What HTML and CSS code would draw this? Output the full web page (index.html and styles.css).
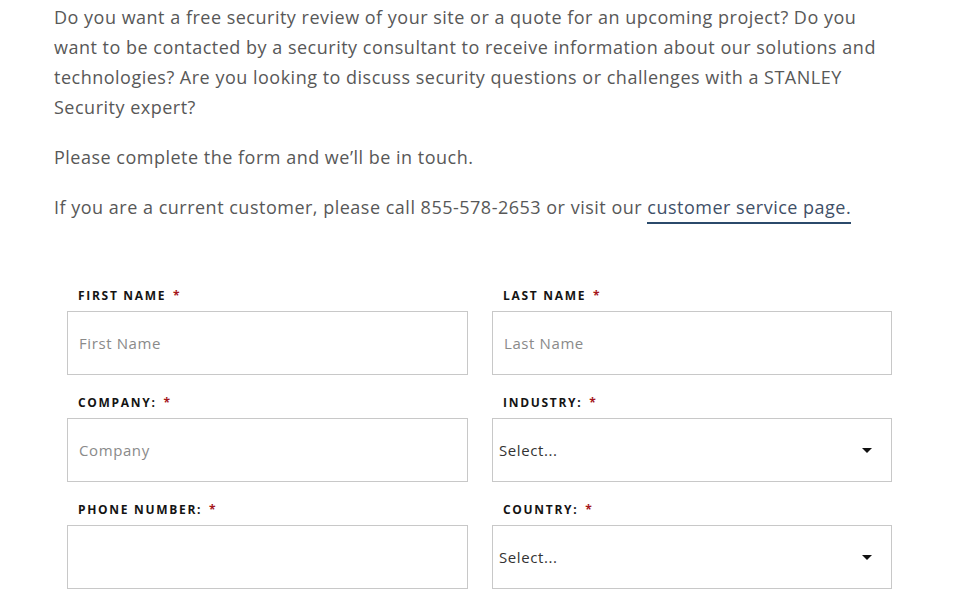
FILE: index.html
```html
<!DOCTYPE HTML>
<html>
    <head>
        <title>Contact a Security Expert</title>
        <meta charset="utf-8" />
        <meta name="viewport" content="width=device-width, initial-scale=1" />
        <link rel="stylesheet" href="styles.css">
    </head>
    <body>
        <div class="page">
            <div class="intro">
                <p>Do you want a free security review of your site or a quote for an upcoming project? Do you want to be contacted by a security consultant to receive information about our solutions and technologies? Are you looking to discuss security questions or challenges with a STANLEY Security expert?</p>
                <p>Please complete the form and we’ll be in touch.</p>
                <p>If you are a current customer, please call 855-578-2653 or visit our <a href="#" class="link">customer service page.</a></p>
            </div>

            <form class="lead-form">
                <div class="field">
                    <label for="firstName">First Name <span class="req">*</span></label>
                    <input type="text" id="firstName" placeholder="First Name">
                </div>
                <div class="field">
                    <label for="lastName">Last Name <span class="req">*</span></label>
                    <input type="text" id="lastName" placeholder="Last Name">
                </div>
                <div class="field">
                    <label for="company">Company: <span class="req">*</span></label>
                    <input type="text" id="company" placeholder="Company">
                </div>
                <div class="field">
                    <label for="industry">Industry: <span class="req">*</span></label>
                    <div class="select-wrap">
                        <select id="industry">
                            <option>Select...</option>
                        </select>
                    </div>
                </div>
                <div class="field">
                    <label for="phone">Phone Number: <span class="req">*</span></label>
                    <input type="tel" id="phone">
                </div>
                <div class="field">
                    <label for="country">Country: <span class="req">*</span></label>
                    <div class="select-wrap">
                        <select id="country">
                            <option>Select...</option>
                        </select>
                    </div>
                </div>
            </form>
        </div>
    </body>
</html>
```

FILE: styles.css
```css
body {
    margin: 0;
    font-family: "Open Sans", "Liberation Sans", sans-serif;
    background-color: #fff;
    color: #585858;
}

.page {
    padding: 2px 0 0 54px;
}

.intro {
    width: 835px;
}

.intro p {
    font-size: 18px;
    line-height: 30px;
    letter-spacing: 0.5px;
    margin: 0 0 20px;
}

.link {
    color: #3f5068;
    text-decoration: none;
    border-bottom: 2px solid #2b4a6b;
    padding-bottom: 3px;
}

.lead-form {
    margin: 66px 0 0 13px;
    display: grid;
    grid-template-columns: 401px 400px;
    column-gap: 24px;
    row-gap: 20px;
}

.field label {
    display: block;
    padding-left: 11px;
    margin-bottom: 7px;
    font-size: 12px;
    font-weight: 700;
    letter-spacing: 1.7px;
    text-transform: uppercase;
    color: #141414;
    line-height: 16px;
}

.req {
    color: #a5161b;
    margin-left: 2px;
}

.field input,
.field select {
    box-sizing: border-box;
    width: 100%;
    height: 64px;
    border: 1px solid #c8c8c8;
    border-radius: 0;
    background: #fff;
    font-family: inherit;
    font-size: 15px;
    letter-spacing: 0.6px;
    color: #333;
    outline: none;
}

.field input {
    padding: 0 11px;
}

.field input::placeholder {
    color: #8a8a8a;
}

.select-wrap {
    position: relative;
}

.field select {
    appearance: none;
    padding: 0 6px;
}

/* little caret on the right of each select */
.select-wrap::after {
    content: "";
    position: absolute;
    right: 20px;
    top: 30px;
    border-left: 5px solid transparent;
    border-right: 5px solid transparent;
    border-top: 5px solid #111;
    pointer-events: none;
}
```
